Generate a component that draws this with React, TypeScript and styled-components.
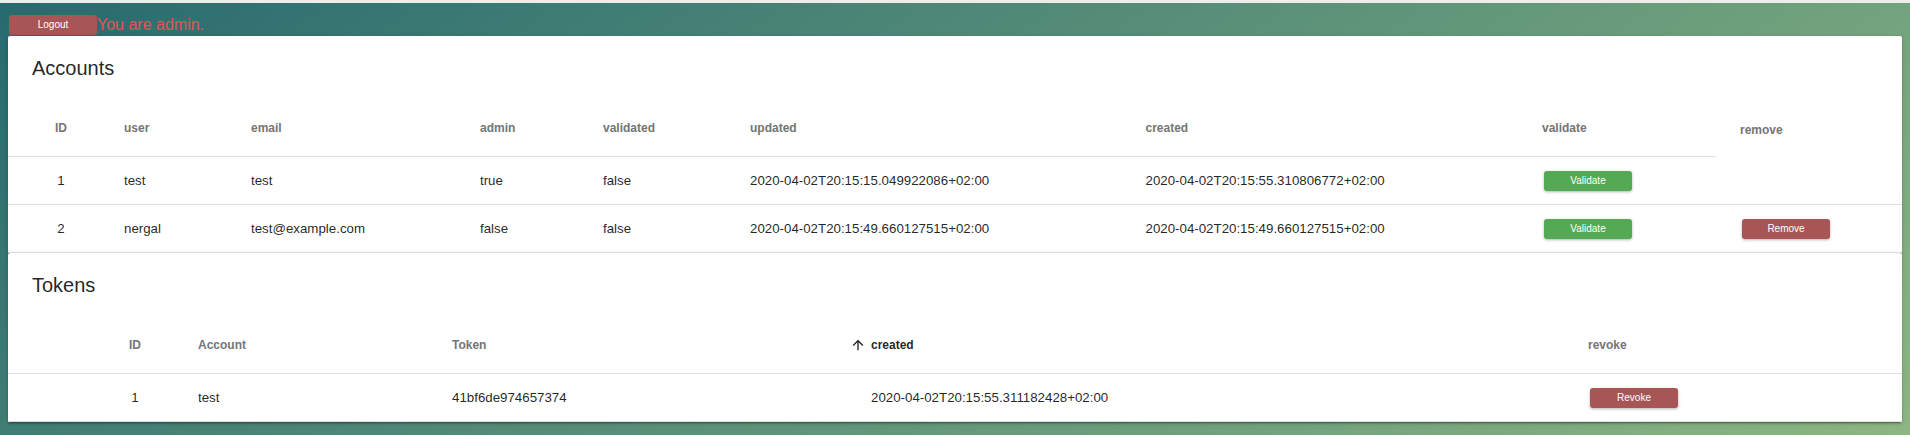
import React from 'react';
import styled, { createGlobalStyle } from 'styled-components';

const GlobalStyle = createGlobalStyle`
  html, body {
    margin: 0;
    padding: 0;
    height: 100%;
  }
  body {
    min-height: 100vh;
    background: linear-gradient(145deg, #276a6f 0%, #8cb682 100%);
    font-family: 'Liberation Sans', Arial, Helvetica, sans-serif;
  }
`;

const TopStrip = styled.div`
  height: 3px;
  background-color: #efede9;
`;

const Header = styled.div`
  display: flex;
  align-items: center;
  padding: 12px 0 1px 9px;
`;

const ActionButton = styled.button<{ $color: string }>`
  all: unset;
  box-sizing: border-box;
  width: 88px;
  height: 20px;
  margin: 0 2px;
  border-radius: 3px;
  background-color: ${({ $color }) => $color};
  color: #fff;
  font-family: 'Liberation Sans', Arial, sans-serif;
  font-size: 10px;
  text-align: center;
  line-height: 20px;
  cursor: pointer;
  box-shadow: 0 1px 3px rgba(0, 0, 0, 0.3);
`;

const LogoutButton = styled(ActionButton)`
  margin: 0;
  box-shadow: none;
`;

const Greeting = styled.span`
  color: #e65353;
  font-size: 16px;
  line-height: 18px;
`;

const Card = styled.section`
  margin: 0 8px;
  background-color: #fff;
  border-radius: 2px;
  box-shadow: 0 3px 1px -2px rgba(0, 0, 0, 0.2), 0 2px 2px 0 rgba(0, 0, 0, 0.14),
    0 1px 5px 0 rgba(0, 0, 0, 0.12);
  position: relative;
`;

const Toolbar = styled.div`
  height: 64px;
  display: flex;
  align-items: center;
  padding: 0 24px;
`;

const Title = styled.h2`
  margin: 0;
  font-size: 20px;
  font-weight: 400;
  color: rgba(0, 0, 0, 0.87);
`;

const Row = styled.div<{ $cols: string }>`
  display: grid;
  grid-template-columns: ${({ $cols }) => $cols};
`;

const HeadCell = styled.div<{ $center?: boolean; $noBorder?: boolean; $active?: boolean; $pad?: number }>`
  box-sizing: border-box;
  height: 57px;
  display: flex;
  align-items: center;
  justify-content: ${({ $center }) => ($center ? 'center' : 'flex-start')};
  padding: ${({ $center, $pad }) => ($center ? '0 10px 0 16px' : `0 8px 0 ${$pad ?? 16}px`)};
  border-bottom: 1px solid ${({ $noBorder }) => ($noBorder ? 'transparent' : '#e0e0e0')};
  font-size: 12px;
  font-weight: 700;
  color: ${({ $active }) => ($active ? 'rgba(0, 0, 0, 0.87)' : '#757575')};
  white-space: nowrap;
`;

const Cell = styled.div<{ $center?: boolean; $pad?: number }>`
  box-sizing: border-box;
  height: 48px;
  display: flex;
  align-items: center;
  justify-content: ${({ $center }) => ($center ? 'center' : 'flex-start')};
  padding: ${({ $center, $pad }) => ($center ? '0 10px 0 16px' : `0 8px 0 ${$pad ?? 16}px`)};
  border-bottom: 1px solid #e0e0e0;
  font-size: 13.3px;
  color: rgba(0, 0, 0, 0.87);
  white-space: nowrap;
`;

const SortIcon = styled.svg`
  width: 16px;
  height: 16px;
  margin: 0 5px 0 -21px;
  fill: rgba(0, 0, 0, 0.87);
  flex-shrink: 0;
`;

const GREEN = '#54a954';
const RED = '#a85555';

const ACCOUNT_COLS = '100px 127px 229px 123px 147px 395.5px 396.5px 190px 1fr';
const TOKEN_COLS = '74px 100px 254px 419px 717px 1fr';

const ACCOUNTS = [
  {
    id: 1,
    user: 'test',
    email: 'test',
    admin: 'true',
    validated: 'false',
    updated: '2020-04-02T20:15:15.049922086+02:00',
    created: '2020-04-02T20:15:55.310806772+02:00',
    removable: false,
  },
  {
    id: 2,
    user: 'nergal',
    email: 'test@example.com',
    admin: 'false',
    validated: 'false',
    updated: '2020-04-02T20:15:49.660127515+02:00',
    created: '2020-04-02T20:15:49.660127515+02:00',
    removable: true,
  },
];

const TOKENS = [
  { id: 1, account: 'test', token: '41bf6de974657374', created: '2020-04-02T20:15:55.311182428+02:00' },
];

export default function App() {
  return (
    <>
      <GlobalStyle />
      <TopStrip />
      <Header>
        <LogoutButton $color={RED} type='button'>
          Logout
        </LogoutButton>
        <Greeting>You are admin.</Greeting>
      </Header>

      <Card>
        <Toolbar>
          <Title>Accounts</Title>
        </Toolbar>
        <Row $cols={ACCOUNT_COLS}>
          <HeadCell $center>ID</HeadCell>
          <HeadCell>user</HeadCell>
          <HeadCell>email</HeadCell>
          <HeadCell>admin</HeadCell>
          <HeadCell>validated</HeadCell>
          <HeadCell>updated</HeadCell>
          <HeadCell>created</HeadCell>
          <HeadCell>validate</HeadCell>
          <HeadCell $noBorder $pad={24} style={{ paddingTop: 3 }}>
            remove
          </HeadCell>
        </Row>
        {ACCOUNTS.map((a) => (
          <Row key={a.id} $cols={ACCOUNT_COLS}>
            <Cell $center>{a.id}</Cell>
            <Cell>{a.user}</Cell>
            <Cell>{a.email}</Cell>
            <Cell>{a.admin}</Cell>
            <Cell>{a.validated}</Cell>
            <Cell>{a.updated}</Cell>
            <Cell>{a.created}</Cell>
            <Cell>
              <ActionButton $color={GREEN} type='button'>
                Validate
              </ActionButton>
            </Cell>
            <Cell $pad={24}>
              {a.removable && (
                <ActionButton $color={RED} type='button'>
                  Remove
                </ActionButton>
              )}
            </Cell>
          </Row>
        ))}
      </Card>

      <Card>
        <Toolbar>
          <Title>Tokens</Title>
        </Toolbar>
        <Row $cols={TOKEN_COLS}>
          <HeadCell />
          <HeadCell $center>ID</HeadCell>
          <HeadCell>Account</HeadCell>
          <HeadCell>Token</HeadCell>
          <HeadCell $active>
            <SortIcon viewBox='0 0 24 24'>
              <path d='M4 12l1.41 1.41L11 7.83V20h2V7.83l5.58 5.59L20 12l-8-8-8 8z' />
            </SortIcon>
            created
          </HeadCell>
          <HeadCell>revoke</HeadCell>
        </Row>
        {TOKENS.map((t) => (
          <Row key={t.id} $cols={TOKEN_COLS}>
            <Cell />
            <Cell $center>{t.id}</Cell>
            <Cell>{t.account}</Cell>
            <Cell>{t.token}</Cell>
            <Cell>{t.created}</Cell>
            <Cell>
              <ActionButton $color={RED} type='button'>
                Revoke
              </ActionButton>
            </Cell>
          </Row>
        ))}
      </Card>
    </>
  );
}
